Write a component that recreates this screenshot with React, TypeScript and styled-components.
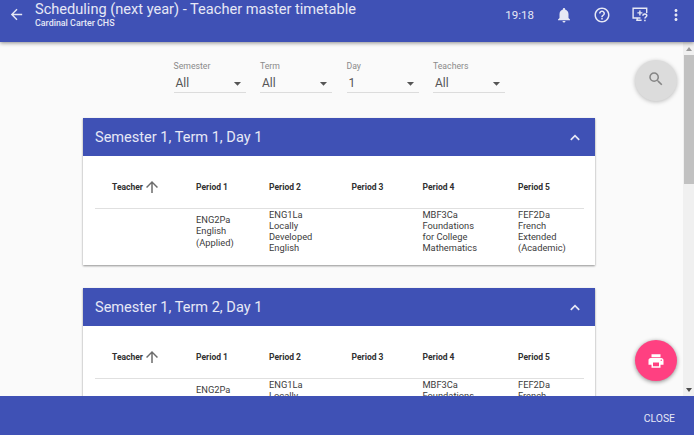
import React from 'react';
import styled, { createGlobalStyle } from 'styled-components';
import {
  MdArrowBack,
  MdArrowDropDown,
  MdArrowUpward,
  MdHelpOutline,
  MdMoreVert,
  MdNotifications,
  MdPrint,
  MdSearch,
} from 'react-icons/md';

const indigo = '#3f51b5';

const GlobalStyle = createGlobalStyle`
  * { box-sizing: border-box; }
  body { margin: 0; font-family: Roboto, sans-serif; overflow: hidden; }
  button { font: inherit; border: 0; padding: 0; background: none; color: inherit; }
  svg { display: block; flex: none; }
`;

const Page = styled.div`
  position: relative;
  display: flex;
  flex-direction: column;
  width: 694px;
  height: 435px;
  background: #fafafa;
  overflow: hidden;
`;

const TopBar = styled.header`
  position: relative;
  z-index: 2;
  flex: none;
  display: flex;
  align-items: flex-start;
  height: 41.5px;
  padding-left: 8px;
  background: ${indigo};
  color: #e6e8f5;
  box-shadow: 0 1px 4px rgba(0, 0, 0, 0.45);
`;

const BackButton = styled.button`
  margin: 6px 10px 0 0;
`;

const Titles = styled.div`
  flex: 1;
  white-space: nowrap;
`;

const Title = styled.h1`
  margin: 1px 0 0;
  font-size: 14.58px;
  font-weight: 400;
  line-height: 17px;
`;

const School = styled.div`
  font-size: 8.9px;
  font-weight: 500;
  line-height: 11px;
`;

const Clock = styled.div`
  margin: 8px 12px 0 0;
  font-size: 11.5px;
  line-height: 14px;
`;

const Actions = styled.div`
  display: flex;
  align-items: center;
  height: 29px;
`;

const Action = styled.button<{ $width: number }>`
  display: flex;
  justify-content: center;
  width: ${(p) => p.$width}px;
`;

const Body = styled.div`
  flex: 1;
  min-height: 0;
  display: flex;
`;

const Content = styled.main`
  flex: 1;
  overflow: hidden;
  padding: 18.5px 88px 0 83px;
`;

const Filters = styled.div`
  display: flex;
  gap: 14.5px;
  padding-left: 90.5px;
`;

const Filter = styled.div`
  width: 72px;
  height: 33px;
  border-bottom: 1px solid #dcdcdc;
  color: #606060;
`;

const FilterLabel = styled.div`
  font-size: 8.7px;
  line-height: 12px;
  color: #8b8b8b;
`;

const FilterValue = styled.div`
  display: flex;
  align-items: center;
  justify-content: space-between;
  height: 20px;
  padding: 2px 0 0 2px;
  font-size: 12px;
  color: #555;
`;

const Card = styled.section`
  height: 147px;
  margin-top: 23px;
  background: #fff;
  box-shadow: 0 1px 2px rgba(0, 0, 0, 0.42);

  ${Filters} + & {
    margin-top: 25px;
  }
`;

const CardHeader = styled.div`
  display: flex;
  align-items: center;
  justify-content: space-between;
  height: 38px;
  padding: 0 15.5px 0 12px;
  background: ${indigo};
  color: #e6e8f5;
  font-size: 14.55px;
`;

const Table = styled.table`
  table-layout: fixed;
  width: 489px;
  margin-left: 12px;
  border-collapse: collapse;
  color: #3c3c3c;
  font-size: 9.3px;
  line-height: 11.3px;
  text-align: left;
`;

const HeadCell = styled.th<{ $width: number }>`
  width: ${(p) => p.$width}px;
  height: 52px;
  padding: 11px 0 0;
  border-bottom: 1px solid #e0e0e0;
  font-size: 8.5px;
  font-weight: 700;
  color: #303030;
  vertical-align: middle;

  &:first-child {
    padding-left: 17px;
  }
`;

const Sort = styled.span`
  display: flex;
  align-items: center;

  svg {
    color: #6c6c6c;
  }
`;

const Cell = styled.td`
  height: 45px;
  padding: 0;
  white-space: pre-line;
  vertical-align: middle;
`;

const ScrollTrack = styled.div`
  display: flex;
  flex-direction: column;
  align-items: center;
  width: 11px;
  padding: 5px 0 4px 1px;
  background: #f0f0f0;
`;

const ScrollThumb = styled.div`
  width: 10px;
  height: 129px;
  margin: 4px 0 auto;
  background: #c1c1c1;
`;

const Fab = styled.button<{ $top: number; $tone: 'grey' | 'pink' }>`
  position: absolute;
  z-index: 1;
  top: ${(p) => p.$top}px;
  left: 635px;
  display: flex;
  align-items: center;
  justify-content: center;
  width: 42px;
  height: 41px;
  padding-bottom: ${(p) => (p.$tone === 'pink' ? 0 : 3)}px;
  border-radius: 50%;
  background: ${(p) => (p.$tone === 'pink' ? '#ff4081' : '#dcdcdc')};
  color: ${(p) => (p.$tone === 'pink' ? '#fff' : '#858585')};
  box-shadow: 0 1px 4px rgba(0, 0, 0, ${(p) => (p.$tone === 'pink' ? 0.45 : 0.25)});
`;

const BottomBar = styled.footer`
  flex: none;
  display: flex;
  align-items: center;
  justify-content: flex-end;
  height: 39.5px;
  padding: 7px 19px 0 0;
  background: ${indigo};
  color: #e6e8f5;
  font-size: 10.4px;
`;

function DisplayHelpIcon() {
  return (
    <svg width="16" height="15" viewBox="0 0 16 15" fill="none" stroke="currentColor" strokeWidth="1.4">
      <path d="M14.7 6V1.2H1.1V11h7.4M4.2 13.3h5.4M5.2 13V11M7.9 3.4v5M5.4 5.9h5" />
      <path d="M10.9 8.7c0-1.2.7-1.8 1.9-1.8s2 .6 2 1.7c0 1.4-1.9 1.4-1.9 3M12.9 12.7v1.5" strokeWidth="1.5" />
    </svg>
  );
}

function CollapseIcon() {
  return (
    <svg width="10" height="7" viewBox="0 0 10 7" fill="none" stroke="currentColor" strokeWidth="1.7">
      <path d="M.8 5.9L5 1.7l4.2 4.2" />
    </svg>
  );
}

function ScrollArrow({ down = false }: { down?: boolean }) {
  return (
    <svg width="6" height="4" viewBox="0 0 6 4">
      <path d={down ? 'M0 0h6L3 4z' : 'M0 4h6L3 0z'} fill={down ? '#4c4c4c' : '#999'} />
    </svg>
  );
}

const filters = [
  ['Semester', 'All'],
  ['Term', 'All'],
  ['Day', '1'],
  ['Teachers', 'All'],
];

const columns: [string, number][] = [
  ['Teacher', 101],
  ['Period 1', 73],
  ['Period 2', 82.5],
  ['Period 3', 71],
  ['Period 4', 95.5],
  ['Period 5', 66],
];

const courses = [
  '',
  'ENG2Pa\nEnglish\n(Applied)',
  'ENG1La\nLocally\nDeveloped\nEnglish',
  '',
  'MBF3Ca\nFoundations\nfor College\nMathematics',
  'FEF2Da\nFrench\nExtended\n(Academic)',
];

function TimetableCard({ title }: { title: string }) {
  return (
    <Card>
      <CardHeader>
        {title}
        <CollapseIcon />
      </CardHeader>
      <Table>
        <thead>
          <tr>
            {columns.map(([label, width], i) => (
              <HeadCell key={label} $width={width}>
                {i === 0 ? (
                  <Sort>
                    {label}
                    <MdArrowUpward size={18} />
                  </Sort>
                ) : (
                  label
                )}
              </HeadCell>
            ))}
          </tr>
        </thead>
        <tbody>
          <tr>
            {courses.map((course, i) => (
              <Cell key={i}>{course}</Cell>
            ))}
          </tr>
        </tbody>
      </Table>
    </Card>
  );
}

export default function App() {
  return (
    <Page>
      <GlobalStyle />
      <TopBar>
        <BackButton aria-label="Back">
          <MdArrowBack size={17} />
        </BackButton>
        <Titles>
          <Title>Scheduling (next year) - Teacher master timetable</Title>
          <School>Cardinal Carter CHS</School>
        </Titles>
        <Clock>19:18</Clock>
        <Actions>
          <Action $width={36} aria-label="Notifications">
            <MdNotifications size={18} />
          </Action>
          <Action $width={39} aria-label="Help">
            <MdHelpOutline size={18} />
          </Action>
          <Action $width={37} aria-label="Display help">
            <DisplayHelpIcon />
          </Action>
          <Action $width={36} aria-label="More">
            <MdMoreVert size={18} />
          </Action>
        </Actions>
      </TopBar>
      <Body>
        <Content>
          <Filters>
            {filters.map(([label, value]) => (
              <Filter key={label}>
                <FilterLabel>{label}</FilterLabel>
                <FilterValue>
                  {value}
                  <MdArrowDropDown size={17} />
                </FilterValue>
              </Filter>
            ))}
          </Filters>
          <TimetableCard title="Semester 1, Term 1, Day 1" />
          <TimetableCard title="Semester 1, Term 2, Day 1" />
        </Content>
        <ScrollTrack>
          <ScrollArrow />
          <ScrollThumb />
          <ScrollArrow down />
        </ScrollTrack>
      </Body>
      <Fab $top={60} $tone="grey" aria-label="Search">
        <MdSearch size={18} />
      </Fab>
      <Fab $top={340} $tone="pink" aria-label="Print">
        <MdPrint size={18} />
      </Fab>
      <BottomBar>
        <button>CLOSE</button>
      </BottomBar>
    </Page>
  );
}
